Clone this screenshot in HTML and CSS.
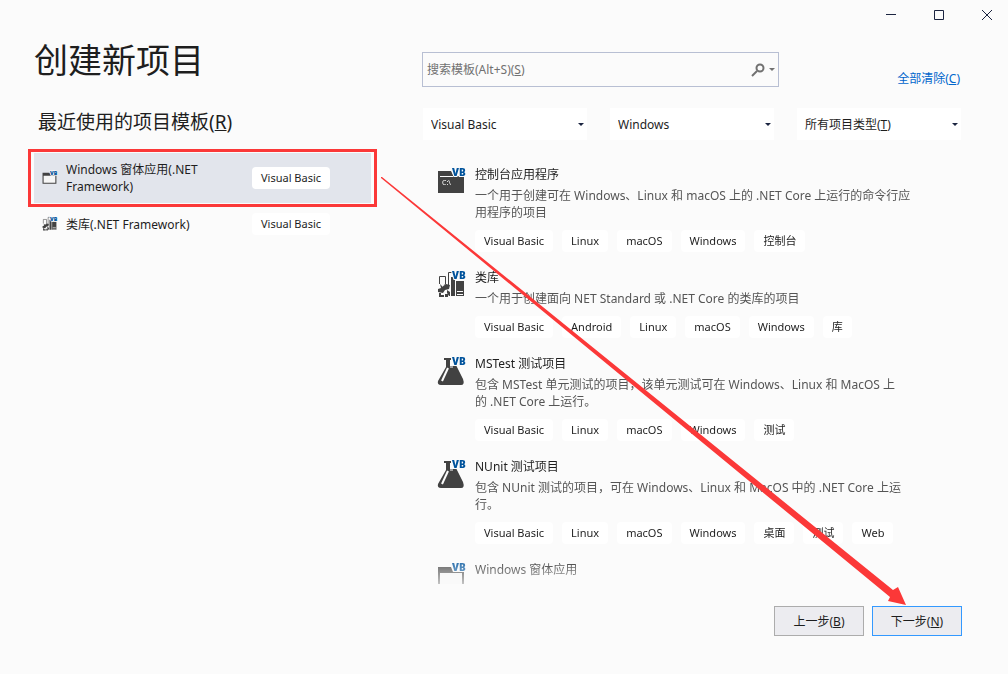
FILE: index.html
```html
<!DOCTYPE html>
<html lang="zh-CN">

<head>
    <meta charset="utf-8" />
    <title>创建新项目</title>
    <meta name="viewport" content="width=device-width, initial-scale=1">
    <link rel="stylesheet" href="styles.css">
</head>

<body>
    <!-- shared icons -->
    <svg class="sprites" aria-hidden="true">
        <symbol id="icon-console" viewBox="0 0 30 30">
            <path class="ink" d="M1 4h13l2 4v1H1z M1 10h26v16H1z" />
            <path class="ink" d="M1 7h2v4H1z M16 9h11v3H16z" />
            <text class="prompt" x="5" y="18">C:\</text>
            <text class="vb" x="15" y="9">VB</text>
        </symbol>
        <symbol id="icon-library" viewBox="0 0 30 30">
            <path class="line" d="M2.500 14V6.500h6V14L6 17 M11.500 15V2.500H15" />
            <path class="ink" d="M14 7h4v19h-4z M19 11h8v15h-8z" />
            <path class="ink" d="M3 14l3 3 3-3 4 1-1 4-4 1-2 3-5-1v-3l3-1z M2 23h2v2h3v2H2z M8 24h3v3H8z M10 20l3 2v4h-1l-2-3z" />
            <path class="cut" d="M20 21.500h6 M20 24.500h6" />
            <text class="vb" x="15" y="9">VB</text>
        </symbol>
        <symbol id="icon-flask" viewBox="0 0 30 30">
            <path class="ink" d="M7 2h7v2h-1v6h4l2-1 7 14q2 6-2 6H4q-4 0-3-4L9 11V4H7z" />
            <path class="cut wide" d="M11 12L5 25" />
            <path class="cut" d="M13 11h3" />
            <text class="vb" x="15" y="9">VB</text>
        </symbol>
        <symbol id="icon-form" viewBox="0 0 30 30">
            <path class="pane" d="M2 9h24v16H2z" />
            <path class="ink" d="M1 5h13l2 5h11v16H1z M3 11v13h22V11z" fill-rule="evenodd" />
            <text class="vb" x="15" y="9">VB</text>
        </symbol>
    </svg>

    <div class="titlebar">
        <button class="win-btn" aria-label="最小化"><svg width="12" height="12"><path d="M1 5.500h10" /></svg></button>
        <button class="win-btn" aria-label="最大化"><svg width="12" height="12"><path d="M1.500 1.500h9v9h-9z" /></svg></button>
        <button class="win-btn" aria-label="关闭"><svg width="12" height="12"><path d="M1 1l10 10M11 1L1 11" /></svg></button>
    </div>

    <main class="content">
        <section class="recent">
            <h1>创建新项目</h1>
            <h2>最近使用的项目模板(<u>R</u>)</h2>
            <div class="highlight">
                <div class="recent-item selected">
                    <svg class="icon-small"><use href="#icon-form" /></svg>
                    <span>Windows 窗体应用(.NET Framework)</span>
                    <span class="tag">Visual Basic</span>
                </div>
            </div>
            <div class="recent-item">
                <svg class="icon-small"><use href="#icon-library" /></svg>
                <span>类库(.NET Framework)</span>
                <span class="tag">Visual Basic</span>
            </div>
        </section>

        <section class="templates">
            <div class="search-row">
                <div class="search">
                    <input type="text" id="search" placeholder=" ">
                    <label for="search">搜索模板(Alt+S)(<u>S</u>)</label>
                    <button class="search-btn" aria-label="搜索">
                        <svg width="24" height="14">
                            <circle cx="9" cy="5" r="3.500" />
                            <path d="M6 8L1 13" />
                            <path class="caret" d="M18 5h6l-3 3z" />
                        </svg>
                    </button>
                </div>
                <a href="#" class="clear">全部清除(<u>C</u>)</a>
            </div>

            <div class="filters">
                <div class="filter">
                    <select aria-label="语言">
                        <option>Visual Basic</option>
                    </select>
                </div>
                <div class="filter">
                    <select aria-label="平台">
                        <option>Windows</option>
                    </select>
                </div>
                <div class="filter">
                    <select id="type">
                        <option value=""></option>
                    </select>
                    <label for="type">所有项目类型(<u>T</u>)</label>
                </div>
            </div>

            <ul class="list">
                <li>
                    <svg class="icon"><use href="#icon-console" /></svg>
                    <div>
                        <h3>控制台应用程序</h3>
                        <p>一个用于创建可在 Windows、Linux 和 macOS 上的 .NET Core 上运行的命令行应<br>用程序的项目</p>
                        <div class="tags">
                            <span class="tag">Visual Basic</span>
                            <span class="tag">Linux</span>
                            <span class="tag">macOS</span>
                            <span class="tag">Windows</span>
                            <span class="tag">控制台</span>
                        </div>
                    </div>
                </li>
                <li>
                    <svg class="icon"><use href="#icon-library" /></svg>
                    <div>
                        <h3>类库</h3>
                        <p>一个用于创建面向 NET Standard 或 .NET Core 的类库的项目</p>
                        <div class="tags">
                            <span class="tag">Visual Basic</span>
                            <span class="tag">Android</span>
                            <span class="tag">Linux</span>
                            <span class="tag">macOS</span>
                            <span class="tag">Windows</span>
                            <span class="tag">库</span>
                        </div>
                    </div>
                </li>
                <li>
                    <svg class="icon"><use href="#icon-flask" /></svg>
                    <div>
                        <h3>MSTest 测试项目</h3>
                        <p>包含 MSTest 单元测试的项目，该单元测试可在 Windows、Linux 和 MacOS 上<br>的 .NET Core 上运行。</p>
                        <div class="tags">
                            <span class="tag">Visual Basic</span>
                            <span class="tag">Linux</span>
                            <span class="tag">macOS</span>
                            <span class="tag">Windows</span>
                            <span class="tag">测试</span>
                        </div>
                    </div>
                </li>
                <li>
                    <svg class="icon"><use href="#icon-flask" /></svg>
                    <div>
                        <h3>NUnit 测试项目</h3>
                        <p>包含 NUnit 测试的项目，可在 Windows、Linux 和 MacOS 中的 .NET Core 上运<br>行。</p>
                        <div class="tags">
                            <span class="tag">Visual Basic</span>
                            <span class="tag">Linux</span>
                            <span class="tag">macOS</span>
                            <span class="tag">Windows</span>
                            <span class="tag">桌面</span>
                            <span class="tag">测试</span>
                            <span class="tag">Web</span>
                        </div>
                    </div>
                </li>
                <li>
                    <svg class="icon"><use href="#icon-form" /></svg>
                    <div>
                        <h3>Windows 窗体应用</h3>
                    </div>
                </li>
            </ul>
        </section>
    </main>

    <footer class="actions">
        <button>上一步(<u>B</u>)</button>
        <button class="primary">下一步(<u>N</u>)</button>
    </footer>

    <!-- arrow from the selected template to the next button -->
    <svg class="arrow" viewBox="0 0 525 427" aria-hidden="true">
        <path d="M0 -1H1L512 412L517 409L525 427L507 423L509 419L0 0Z" />
    </svg>
</body>

</html>
```

FILE: styles.css
```css
* {
    box-sizing: border-box;
}

body {
    margin: 0;
    height: 100vh;
    display: flex;
    flex-direction: column;
    position: relative;
    overflow: hidden;
    background-color: #fbfbfb;
    color: #1e1e1e;
    font-family: "Noto Sans", "Noto Sans CJK SC", sans-serif;
    font-size: 12px;
    line-height: 17px;
}

h1, h2, h3, p, ul {
    margin: 0;
    padding: 0;
    font-weight: normal;
}

button, input, select {
    font: inherit;
    color: inherit;
}

/* icons */

.sprites {
    display: none;
}

.ink {
    fill: #424242;
}

.pane {
    fill: #f6f6f6;
}

.line {
    fill: none;
    stroke: #424242;
}

.cut {
    fill: none;
    stroke: #fbfbfb;
}

.cut.wide {
    stroke-width: 2px;
}

.prompt {
    fill: #ffffff;
    font-size: 7px;
}

.vb {
    fill: #00539c;
    stroke: #fbfbfb;
    stroke-width: 2px;
    paint-order: stroke;
    font-family: "Open Sans", sans-serif;
    font-size: 10px;
    font-weight: 800;
}

.icon {
    width: 30px;
    height: 30px;
    margin-top: 2px;
    flex: none;
}

.icon-small {
    width: 16px;
    height: 16px;
}

/* title bar */

.titlebar {
    display: flex;
    justify-content: flex-end;
    gap: 6px;
    height: 30px;
    flex: none;
}

.win-btn {
    width: 42px;
    padding: 0;
    border: 0;
    background: none;
    display: flex;
    align-items: center;
    justify-content: center;
}

.win-btn path {
    fill: none;
    stroke: #1b2440;
}

/* layout */

.content {
    flex: 1;
    min-height: 0;
    display: flex;
    gap: 45px;
    padding: 0 46px 0 28px;
}

.recent {
    width: 349px;
    flex: none;
}

.templates {
    flex: 1;
    min-width: 0;
    display: flex;
    flex-direction: column;
    padding-top: 22px;
}

/* recent templates */

h1 {
    margin: 6px 0 24px 6px;
    font-size: 34px;
    line-height: 48px;
}

h2 {
    margin: 0 0 13px 10px;
    font-size: 19px;
    line-height: 28px;
}

.highlight {
    border: 3px solid #fb3838;
    padding: 1px 3px;
    margin-bottom: 6px;
}

.recent-item {
    display: grid;
    grid-template-columns: 16px 178px auto;
    justify-content: start;
    align-items: center;
    gap: 8px;
    padding-left: 14px;
}

.recent-item.selected {
    height: 50px;
    padding-left: 8px;
    background-color: #e2e5ec;
}

.recent-item span:not(.tag) {
    padding-right: 30px;
}

.tag {
    display: inline-block;
    padding: 0 9px;
    border-radius: 4px;
    background-color: #ffffff;
    font-size: 11px;
    line-height: 22px;
    white-space: nowrap;
}

/* search */

.search-row {
    display: flex;
    justify-content: space-between;
    margin-bottom: 21px;
    padding-right: 2px;
}

.search {
    position: relative;
    width: 357px;
}

.search input {
    display: block;
    width: 100%;
    height: 35px;
    padding: 0 40px 0 4px;
    border: 1px solid #b8bfd3;
    background: none;
}

.search label {
    position: absolute;
    left: 5px;
    top: 9px;
    color: #717171;
    pointer-events: none;
}

.search input:not(:placeholder-shown) + label {
    display: none;
}

.search-btn {
    position: absolute;
    right: 4px;
    top: 11px;
    padding: 0;
    border: 0;
    background: none;
    display: flex;
}

.search-btn circle, .search-btn path {
    fill: none;
    stroke: #717171;
    stroke-width: 2px;
}

.search-btn .caret {
    fill: #717171;
    stroke: none;
}

.clear {
    align-self: flex-end;
    color: #0066cc;
    text-decoration: none;
}

/* filters */

.filters {
    display: flex;
    gap: 23px;
    padding: 0 1px;
    margin-bottom: 25px;
}

.filter {
    position: relative;
    flex: 1;
}

.filter select {
    display: block;
    appearance: none;
    width: 100%;
    height: 32px;
    padding: 0 8px;
    border: 0;
    border-radius: 0;
    background-color: #ffffff;
}

.filter label {
    position: absolute;
    left: 8px;
    top: 8px;
    pointer-events: none;
}

.filter::after {
    content: "";
    position: absolute;
    right: 3px;
    top: 15px;
    border: 3px solid transparent;
    border-top-color: #1b2440;
    border-bottom: 0;
}

/* template list */

.list {
    flex: 1;
    min-height: 0;
    overflow: hidden;
    list-style: none;
    -webkit-mask-image: linear-gradient(to top, rgba(0, 0, 0, 0.3), #000 30px);
    mask-image: linear-gradient(to top, rgba(0, 0, 0, 0.3), #000 30px);
}

.list li {
    display: flex;
    gap: 8px;
    padding: 0 30px 16px 15px;
}

.list h3 {
    margin-bottom: 2px;
    font-size: 12px;
    line-height: 20px;
}

.list p {
    margin-bottom: 9px;
    color: #555555;
}

.tags {
    display: flex;
    gap: 9px;
}

/* buttons */

.actions {
    display: flex;
    justify-content: flex-end;
    gap: 8px;
    padding: 22px 46px 38px;
}

.actions button {
    width: 90px;
    height: 30px;
    padding: 0;
    border: 1px solid #acacac;
    background-color: #ececf0;
}

.actions .primary {
    border-color: #3399ff;
}

.arrow {
    position: absolute;
    left: 381px;
    top: 178px;
    width: 525px;
    height: 427px;
    overflow: visible;
    fill: #fb3838;
    pointer-events: none;
}
```
